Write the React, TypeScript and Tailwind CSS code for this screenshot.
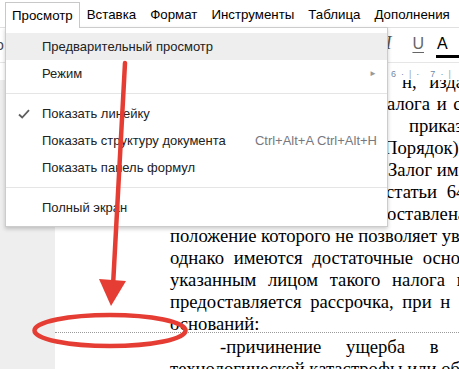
import React from "react";

const tabs = ["Просмотр", "Вставка", "Формат", "Инструменты", "Таблица", "Дополнения"];

// строка документа: отступ слева = колонка текста страницы
function Line({ children, className = "" }: { children: React.ReactNode; className?: string }) {
  return <div className={`h-[22px] pl-[115px] whitespace-nowrap ${className}`}>{children}</div>;
}

export default function App() {
  return (
    <div className="relative w-[459px] h-[369px] overflow-hidden bg-white font-['Liberation_Sans',Arial,sans-serif]">
      {/* Menu bar */}
      <div className="flex h-[27px] items-start pt-[2px] pl-[5px] text-[13.3px] text-black">
        {tabs.map((t, i) => (
          <div
            key={t}
            className={
              i === 0
                ? "relative z-30 h-[26px] px-[6px] border border-b-0 border-[#c8c8c8] bg-white flex items-center leading-none"
                : "h-[25px] px-[6px] border border-transparent flex items-center leading-none"
            }
          >
            {t}
          </div>
        ))}
      </div>

      {/* Toolbar */}
      <div className="h-[35px] border-t border-[#e0e0e0] flex items-center">
        <span className="-ml-[4px] text-[14px] text-[#444]">о</span>
        <div className="ml-auto flex items-end h-[26px]">
          <span className="font-['Liberation_Serif',serif] italic text-[18px] leading-none text-[#555] mb-[6px]">I</span>
          <span className="ml-[21px] text-[16px] leading-none text-[#666] underline underline-offset-[3px] mb-[6px]">U</span>
          <div className="ml-[12px] flex flex-col items-start w-[23px]">
            <span className="ml-[1px] text-[16px] leading-none text-black">A</span>
            <div className="mt-[3px] h-[3px] w-[23px] bg-black" />
          </div>
        </div>
      </div>

      {/* Ruler */}
      <div className="h-[18px] border-t border-[#e6e6e6] flex items-end pb-[1px] pl-[391px] gap-[5px] text-[9px] text-[#7388a8] leading-none">
        <span>6</span>
        <span>·</span>
        <span className="text-[#9aa]">|</span>
        <span>·</span>
        <span className="ml-[6px]">7</span>
        <span>·</span>
        <span className="text-[#9aa]">|</span>
      </div>

      {/* Document */}
      <div className="flex h-[289px]">
        <div className="w-[55px] bg-[#eeeeee]" />
        <div className="flex-1 bg-white overflow-hidden font-['Liberation_Serif','Times_New_Roman',serif] text-[18.67px] leading-[22px] text-black">
          <div className="-mt-[9px]">
            <Line><span className="ml-[232px] [word-spacing:8px]">н, изда</span></Line>
            <Line><span className="ml-[217px] [word-spacing:2px]">алога и со</span></Line>
            <Line><span className="ml-[239px]">приказ</span></Line>
            <Line><span className="ml-[214px]">Порядок)</span></Line>
            <Line><span className="ml-[218px]">Залог им</span></Line>
            <Line><span className="ml-[216px] [word-spacing:5px]">статьи 64</span></Line>
            <Line><span className="ml-[217px]">оставлена</span></Line>
            <Line className="[word-spacing:0px]">положение которого не позволяет ув</Line>
            <Line className="[word-spacing:5px]">однако имеются достаточные осно</Line>
            <Line className="[word-spacing:7px]">указанным лицом такого налога в</Line>
            <Line className="[word-spacing:4px]">предоставляется рассрочка, при н</Line>
            <div className="h-[19px] pl-[115px] whitespace-nowrap">оснований:</div>
            <div className="border-t border-dotted border-[#9a9a9a]" />
            <Line className="mt-[3px] [word-spacing:20px]">
              <span className="ml-[50px]">-причинение ущерба в</span>
            </Line>
            <Line>технологической катастрофы или об</Line>
          </div>
        </div>
      </div>

      {/* Dropdown menu */}
      <div className="absolute left-[5px] top-[27px] z-20 w-[383px] bg-white border border-[rgba(0,0,0,0.2)] shadow-[0_2px_4px_rgba(0,0,0,0.2)] py-[5px] text-[13px] text-[#222]">
        <div className="h-[27px] flex items-center pl-[36px] bg-[#eeeeee]">Предварительный просмотр</div>
        <div className="h-[27px] flex items-center pl-[36px] pr-[10px]">
          <span>Режим</span>
          <span className="ml-auto text-[8px] text-[#999]">►</span>
        </div>
        <div className="h-[13px] flex items-center">
          <div className="w-full border-t border-[#e5e5e5]" />
        </div>
        <div className="relative h-[27px] flex items-center pl-[36px]">
          <svg className="absolute left-[12px] top-[9px]" width="12" height="10" viewBox="0 0 12 10">
            <path d="M1 5.5 L4.2 8.5 L11 1.2" stroke="#5f5f5f" strokeWidth="1.8" fill="none" />
          </svg>
          Показать линейку
        </div>
        <div className="h-[27px] flex items-center pl-[36px] pr-[10px]">
          <span>Показать структуру документа</span>
          <span className="ml-auto text-[#77787f]">Ctrl+Alt+A Ctrl+Alt+H</span>
        </div>
        <div className="h-[27px] flex items-center pl-[36px]">Показать панель формул</div>
        <div className="h-[13px] flex items-center">
          <div className="w-full border-t border-[#e5e5e5]" />
        </div>
        <div className="h-[27px] flex items-center pl-[36px]">Полный экран</div>
      </div>

      {/* Red annotation */}
      <svg className="absolute inset-0 z-40 pointer-events-none" width="459" height="369" viewBox="0 0 459 369">
        <path d="M125 63 L113 286" stroke="#e53d33" strokeWidth="4.5" strokeLinecap="round" fill="none" />
        <path d="M99 279 L126 281 L111 306 Z" fill="#e53d33" />
        <ellipse cx="110" cy="330.5" rx="75.5" ry="15.5" stroke="#e53d33" strokeWidth="4.5" fill="none" />
      </svg>
    </div>
  );
}
